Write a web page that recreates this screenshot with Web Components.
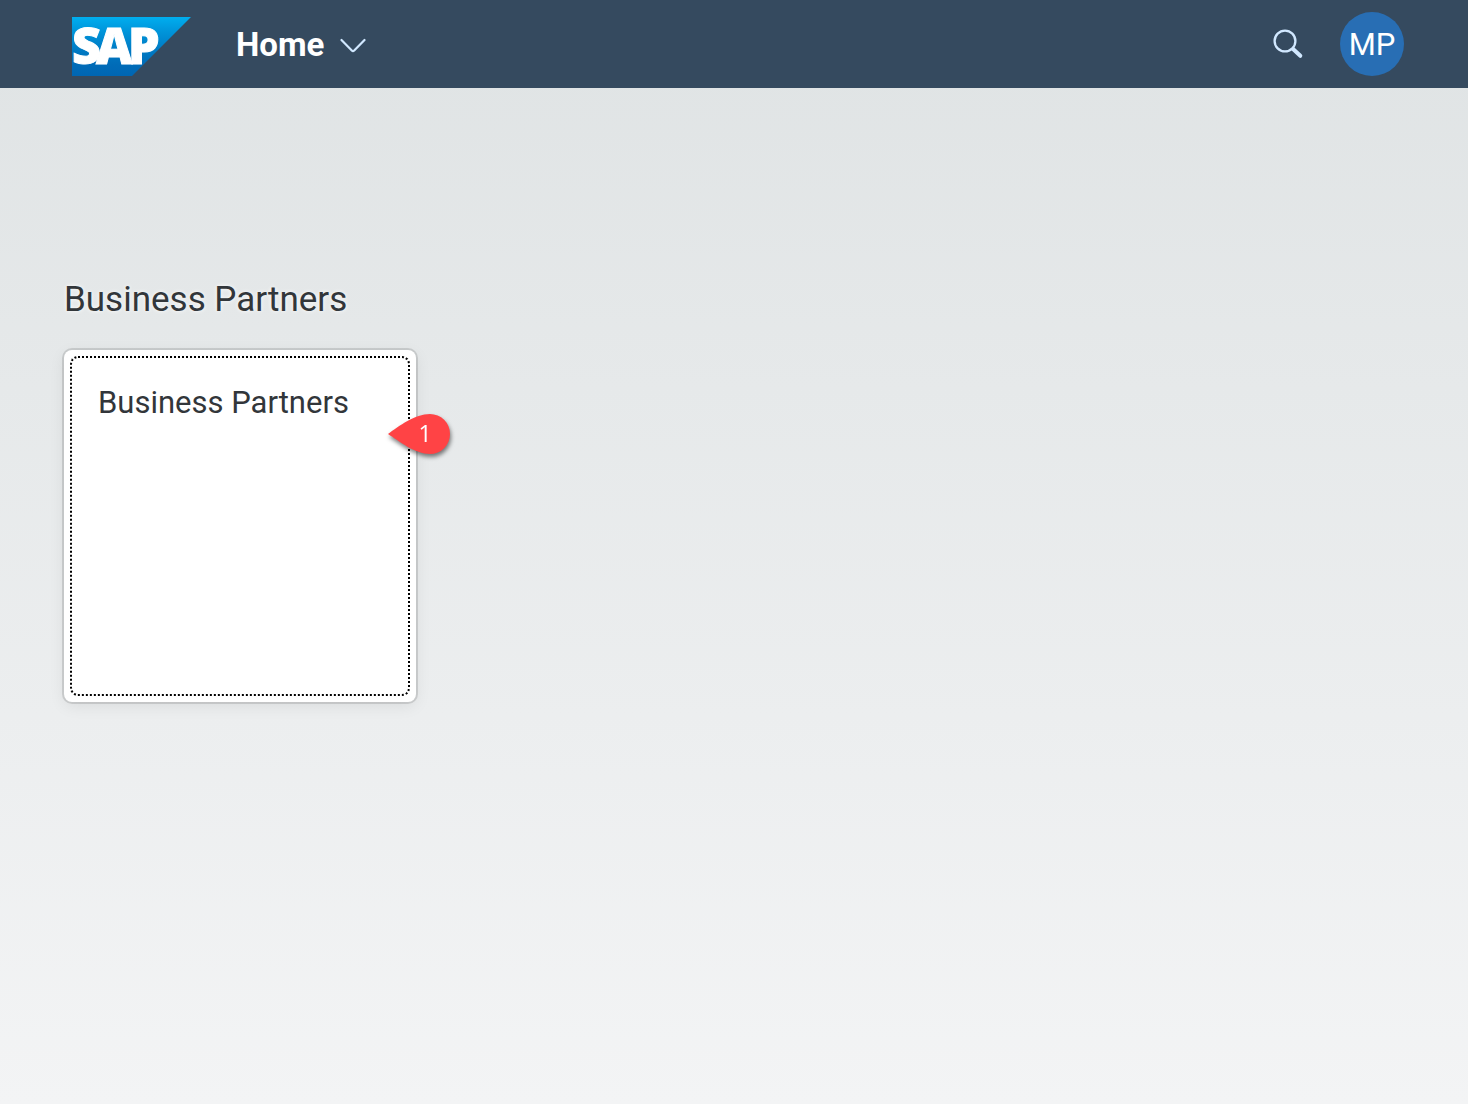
<!DOCTYPE html>
<html lang="en">
<head>
<meta charset="utf-8">
<title>Home</title>
<style>
  html, body { margin: 0; min-height: 100%; }
  body { font-family: Roboto, "Open Sans", sans-serif; color: #32363a; }
</style>
</head>
<body>
<launchpad-page>
  <shell-header slot="header">
    <sap-logo slot="logo"></sap-logo>
    <nav-menu slot="title">Home</nav-menu>
    <search-button slot="tools"></search-button>
    <user-avatar slot="tools">MP</user-avatar>
  </shell-header>
  <tile-group heading="Business Partners">
    <launch-tile heading="Business Partners">
      <step-pin slot="marker" step="1"></step-pin>
    </launch-tile>
  </tile-group>
</launchpad-page>
<script>
const define = (name, render) => customElements.define(name, class extends HTMLElement {
  constructor() {
    super();
    this.attachShadow({ mode: "open" });
  }
  connectedCallback() {
    this.shadowRoot.innerHTML = render(this);
  }
});

define("launchpad-page", () => `
  <style>
    :host { display: flex; flex-direction: column; min-height: 100vh;
      background: linear-gradient(to bottom, #dfe3e4, #f3f4f5); }
    main { flex: 1; padding: 188px 64px 64px; }
  </style>
  <slot name="header"></slot>
  <main><slot></slot></main>`);

define("shell-header", () => `
  <style>
    :host { display: block; }
    header { display: flex; align-items: center; justify-content: space-between;
      height: 88px; padding: 0 64px 0 72px; background: #354a5f; }
    .start { display: flex; align-items: center; gap: 45px; }
    .end { display: flex; align-items: center; gap: 36px; }
  </style>
  <header>
    <div class="start"><slot name="logo"></slot><slot name="title"></slot></div>
    <div class="end"><slot name="tools"></slot></div>
  </header>`);

define("sap-logo", () => `
  <style>
    :host { display: block; padding-top: 4px; }
    a, svg { display: block; }
    svg { overflow: visible; }
    text { font: 800 50px "Open Sans", Roboto, sans-serif; fill: #fff; stroke: #fff; stroke-width: 1; }
  </style>
  <a href="#home" aria-label="Home page">
    <svg width="119" height="59" viewBox="0 0 119 59">
      <defs>
        <linearGradient id="blue" x1="0" y1="0" x2="0" y2="1">
          <stop offset="0" stop-color="#00aeef"/>
          <stop offset=".22" stop-color="#0097dc"/>
          <stop offset=".54" stop-color="#007cc5"/>
          <stop offset=".8" stop-color="#006cb8"/>
          <stop offset="1" stop-color="#0066b3"/>
        </linearGradient>
      </defs>
      <path fill="url(#blue)" d="M0 0h119L60 59H0z"/>
      <text x="0 24 56" y="47">SAP</text>
    </svg>
  </a>`);

define("nav-menu", () => `
  <style>
    :host { display: block; padding-top: 2px; }
    button { display: flex; align-items: center; gap: 16px; padding: 0; border: 0; background: none;
      font: 700 33px/40px Roboto, sans-serif; color: #fff; }
    svg { display: block; margin-top: 2px; }
  </style>
  <button type="button" aria-haspopup="true">
    <slot></slot>
    <svg width="26" height="16" viewBox="0 0 26 16" fill="none" stroke="#d1e8ff" stroke-width="2.2" stroke-linecap="round" stroke-linejoin="round">
      <path d="M1.500 2l10.300 10.500q1.200 1.200 2.400 0L24.500 2"/>
    </svg>
  </button>`);

define("search-button", () => `
  <style>
    :host { display: block; }
    button { display: block; padding: 0; border: 0; background: none; }
    svg { display: block; }
  </style>
  <button type="button" aria-label="Search">
    <svg width="32" height="32" viewBox="0 0 32 32" fill="none" stroke="#d1e8ff" stroke-linecap="round">
      <circle cx="13" cy="13" r="10.400" stroke-width="2.300"/>
      <path d="M21.300 21.300l7 6.500" stroke-width="4"/>
    </svg>
  </button>`);

define("user-avatar", () => `
  <style>
    :host { display: block; }
    button { display: flex; align-items: center; justify-content: center; box-sizing: border-box;
      width: 64px; height: 64px; padding: 2px 0 0; border: 0; border-radius: 50%; background: #286eb4;
      font: 400 31px/40px Roboto, sans-serif; color: #fff; }
  </style>
  <button type="button"><slot></slot></button>`);

define("tile-group", el => `
  <style>
    :host { display: block; }
    h2 { margin: 0 0 26px; font: 400 35px/48px Roboto, sans-serif; text-shadow: 0 0 4px #fff; }
    .tiles { display: flex; flex-wrap: wrap; gap: 16px; }
  </style>
  <section>
    <h2>${el.getAttribute("heading")}</h2>
    <div class="tiles"><slot></slot></div>
  </section>`);

define("launch-tile", el => `
  <style>
    :host { display: block; position: relative; }
    a { display: block; box-sizing: border-box; width: 352px; height: 352px; padding: 6px;
      border-radius: 8px; background: #fff; color: inherit; text-decoration: none;
      box-shadow: 0 0 0 2px rgba(0, 0, 0, .12), 0 4px 16px rgba(0, 0, 0, .08); }
    .focus { display: block; box-sizing: border-box; height: 100%; padding: 25px 26px;
      border: 2px dotted #000; border-radius: 8px; }
    h3 { margin: 0; font: 400 31px/40px Roboto, sans-serif; }
    ::slotted(step-pin) { position: absolute; left: 320px; top: 60px; }
  </style>
  <a href="#business-partners"><div class="focus"><h3>${el.getAttribute("heading")}</h3></div></a>
  <slot name="marker"></slot>`);

define("step-pin", el => `
  <style>
    :host { display: block; }
    svg { display: block; overflow: visible; filter: drop-shadow(1px 3px 2px rgba(0, 0, 0, .5)); }
    text { font: 500 23px "Open Sans", sans-serif; fill: #fff; }
  </style>
  <svg width="70" height="48" viewBox="0 0 70 48">
    <path fill="#ff4345" d="M4 24C15 16 31 4 46 4a20 20 0 0 1 0 40C31 44 15 31 4 24z"/>
    <text x="41" y="32" text-anchor="middle">${el.getAttribute("step")}</text>
  </svg>`);
</script>
</body>
</html>
